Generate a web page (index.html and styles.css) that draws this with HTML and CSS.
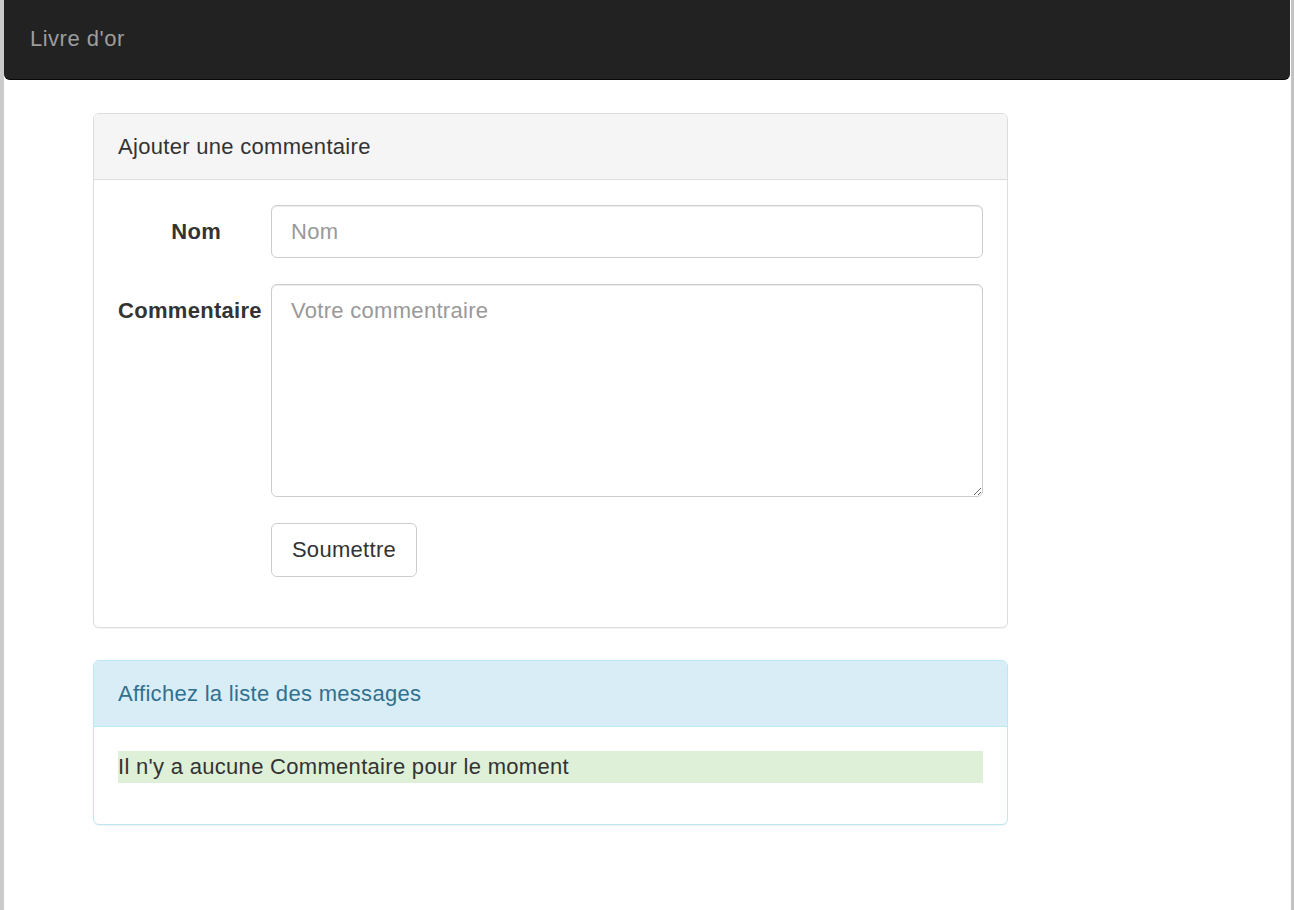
FILE: index.html
```html
<!DOCTYPE html>
<html lang="fr">
<head>
<meta charset="utf-8">
<title>Livre d'or</title>
<link rel="stylesheet" href="styles.css">
</head>
<body>
<div class="frame">
  <nav class="navbar">
    <a class="brand" href="#">Livre d'or</a>
  </nav>
  <main class="container">
    <section class="panel panel-default">
      <div class="panel-heading">Ajouter une commentaire</div>
      <div class="panel-body">
        <form class="form-grid">
          <label class="form-label" for="nom">Nom</label>
          <input class="form-control input" id="nom" type="text" placeholder="Nom">
          <label class="form-label" for="commentaire">Commentaire</label>
          <textarea class="form-control textarea" id="commentaire" placeholder="Votre commentraire"></textarea>
          <div class="spacer"></div>
          <div><button class="btn" type="button">Soumettre</button></div>
        </form>
      </div>
    </section>
    <section class="panel panel-info">
      <div class="panel-heading">Affichez la liste des messages</div>
      <div class="panel-body panel-body-list">
        <p class="empty">Il n'y a aucune Commentaire pour le moment</p>
      </div>
    </section>
  </main>
</div>
</body>
</html>
```

FILE: styles.css
```css
html, body {
  margin: 0;
  padding: 0;
  background: #fff;
}

body {
  font-family: "Liberation Sans", Arial, Helvetica, sans-serif;
  font-size: 22px;
  letter-spacing: 0.3px;
  color: #333;
}

.frame {
  box-sizing: border-box;
  width: 1294px;
  min-height: 910px;
  border-left: 4px solid #cbcbcb;
  border-right: 3px solid #c3c3c3;
  display: flex;
  flex-direction: column;
}

.navbar {
  height: 79px;
  margin-right: 1px;
  background: #222;
  border-bottom: 1px solid #080808;
  border-radius: 0 0 6px 6px;
  display: flex;
  align-items: center;
  padding-left: 26px;
}

.brand {
  color: #9d9d9d;
  text-decoration: none;
  font-size: 22px;
  letter-spacing: 0.5px;
  line-height: 28px;
  padding-bottom: 1px;
}

.container {
  width: 915px;
  margin-left: 89px;
  padding-top: 33px;
}

.panel {
  box-sizing: border-box;
  border: 1px solid #ddd;
  border-radius: 6px;
  box-shadow: 0 1px 1px rgba(0, 0, 0, 0.05);
  background: #fff;
}

.panel + .panel {
  margin-top: 32px;
}

.panel-heading {
  height: 65px;
  line-height: 65px;
  padding: 0 24px;
  background: #f5f5f5;
  border-bottom: 1px solid #ddd;
  border-radius: 5px 5px 0 0;
  color: #333;
}

.panel-info {
  border-color: #bce8f1;
}

.panel-info .panel-heading {
  background: #d9edf7;
  border-bottom-color: #bce8f1;
  color: #31708f;
}

.panel-body {
  padding: 25px 24px 50px;
}

.panel-body-list {
  padding: 24px 24px 41px;
}

.form-grid {
  display: grid;
  grid-template-columns: 103px 1fr;
  column-gap: 50px;
  row-gap: 26px;
  margin: 0;
}

.form-label {
  font-weight: bold;
  text-align: right;
  white-space: nowrap;
  line-height: 28px;
  padding-top: 13px;
}

.form-control {
  box-sizing: border-box;
  width: 100%;
  margin: 0;
  border: 1px solid #ccc;
  border-radius: 6px;
  box-shadow: inset 0 1px 1px rgba(0, 0, 0, 0.075);
  font-family: "Liberation Sans", Arial, Helvetica, sans-serif;
  font-size: 22px;
  letter-spacing: 0.3px;
  line-height: 28px;
  color: #555;
  background: #fff;
  outline: none;
}

.form-control::placeholder {
  color: #999;
}

.input {
  height: 53px;
  padding: 0 19px;
}

.textarea {
  height: 213px;
  padding: 12px 19px;
  resize: vertical;
  display: block;
}

.btn {
  box-sizing: border-box;
  width: 146px;
  height: 54px;
  padding: 0 19px;
  border: 1px solid #ccc;
  border-radius: 6px;
  background: #fff;
  color: #333;
  font-family: "Liberation Sans", Arial, Helvetica, sans-serif;
  font-size: 22px;
  letter-spacing: 0.3px;
  line-height: 28px;
  cursor: pointer;
}

.empty {
  margin: 0;
  height: 32px;
  line-height: 32px;
  background: #dff0d8;
  color: #333;
}
```
